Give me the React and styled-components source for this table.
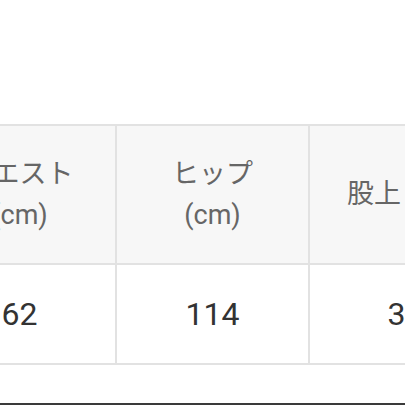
import { useLayoutEffect, useRef } from "react";
import styled, { createGlobalStyle } from "styled-components";

const GlobalStyle = createGlobalStyle`
  html, body {
    margin: 0;
    padding: 0;
    background: #fff;
  }
  body {
    font-family: Roboto, "Noto Sans CJK JP", sans-serif;
  }
`;

const columns = [
  { label: ["ウエスト", "(cm)"], value: "62" },
  { label: ["ヒップ", "(cm)"], value: "114" },
  { label: ["股上 (cm)"], value: "30" },
  { label: ["股下", "(cm)"], value: "68" },
  { label: ["裾幅", "(cm)"], value: "22" },
];

const App = () => {
  const scroller = useRef(null);

  // the table is shown scrolled a little to the right
  useLayoutEffect(() => {
    if (scroller.current) scroller.current.scrollLeft = 78;
  }, []);

  return (
    <>
      <GlobalStyle />
      <Page>
        <Scroller ref={scroller}>
          <Table $cols={columns.length}>
            {columns.map((c, i) => (
              <HeadCell key={"h" + i}>
                {c.label.map((line, j) => (
                  <span key={j}>{line}</span>
                ))}
              </HeadCell>
            ))}
            {columns.map((c, i) => (
              <Cell key={"d" + i}>{c.value}</Cell>
            ))}
          </Table>
        </Scroller>
        <Divider />
      </Page>
    </>
  );
};

const Page = styled.div`
  padding-top: 124px;
  width: 405px;
  overflow: hidden;
`;

const Scroller = styled.div`
  overflow-x: auto;
  scrollbar-width: none;

  &::-webkit-scrollbar {
    display: none;
  }
`;

const Table = styled.div`
  display: grid;
  grid-template-columns: repeat(${(p) => p.$cols}, 193px);
  grid-template-rows: 139px 100px;
  width: max-content;
  border-top: 2px solid #e2e2e2;
  border-left: 2px solid #e2e2e2;
`;

const HeadCell = styled.div`
  box-sizing: border-box;
  display: flex;
  flex-direction: column;
  align-items: center;
  justify-content: center;
  background: #f7f7f7;
  border-right: 2px solid #e2e2e2;
  border-bottom: 2px solid #e2e2e2;
  color: #666;
  font-size: 27px;
  line-height: 41px;
  white-space: nowrap;
`;

const Cell = styled.div`
  box-sizing: border-box;
  display: flex;
  align-items: center;
  justify-content: center;
  background: #fff;
  border-right: 2px solid #e2e2e2;
  border-bottom: 2px solid #e2e2e2;
  color: #333;
  font-family: Roboto, sans-serif;
  font-size: 32px;
`;

const Divider = styled.div`
  margin-top: 38px;
  height: 3px;
  background: #3a3a3a;
`;

export default App;
